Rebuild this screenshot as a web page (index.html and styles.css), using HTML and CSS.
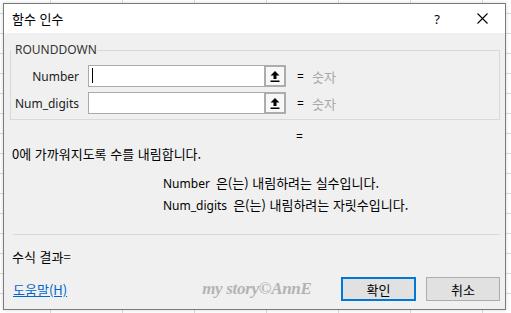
FILE: index.html
```html
<!DOCTYPE html>
<html lang="ko">
<head>
    <meta charset="UTF-8">
    <meta name="viewport" content="width=device-width, initial-scale=1.0">
    <title>함수 인수</title>
    <link rel="stylesheet" href="styles.css">
</head>
<body>
    <div class="dialog">
        <div class="titlebar">
            <div class="title">함수 인수</div>
            <div class="help">?</div>
            <div class="close">
                <svg width="11" height="11" viewBox="0 0 11 11">
                    <path d="M0.5 0.5 L10.5 10.5 M10.5 0.5 L0.5 10.5" stroke="#000" stroke-width="1.1" fill="none"/>
                </svg>
            </div>
        </div>

        <div class="content">
            <fieldset class="group">
                <legend>ROUNDDOWN</legend>
                <div class="arg-row">
                    <label class="arg-label">Number</label>
                    <div class="arg-input focused"><span class="caret"></span></div>
                    <button class="ref-btn">
                        <svg width="10" height="13" viewBox="0 0 10 13">
                            <path d="M5 1 L9.5 5.5 H6.5 V9 H3.5 V5.5 H0.5 Z" fill="#000"/>
                            <rect x="0.5" y="10.5" width="9" height="1.5" fill="#000"/>
                        </svg>
                    </button>
                    <span class="eq">=</span>
                    <span class="hint">숫자</span>
                </div>
                <div class="arg-row">
                    <label class="arg-label">Num_digits</label>
                    <div class="arg-input"></div>
                    <button class="ref-btn">
                        <svg width="10" height="13" viewBox="0 0 10 13">
                            <path d="M5 1 L9.5 5.5 H6.5 V9 H3.5 V5.5 H0.5 Z" fill="#000"/>
                            <rect x="0.5" y="10.5" width="9" height="1.5" fill="#000"/>
                        </svg>
                    </button>
                    <span class="eq">=</span>
                    <span class="hint">숫자</span>
                </div>
            </fieldset>

            <div class="result-eq">=</div>
            <p class="desc">0에 가까워지도록 수를 내림합니다.</p>
            <p class="arg-desc first"><span class="arg-name">Number</span>은(는) 내림하려는 실수입니다.</p>
            <p class="arg-desc"><span class="arg-name">Num_digits</span>은(는) 내림하려는 자릿수입니다.</p>

            <div class="separator"></div>

            <p class="formula">수식 결과=</p>

            <div class="footer">
                <a class="help-link" href="#">도움말(H)</a>
                <span class="watermark">my story©AnnE</span>
                <button class="btn btn-ok">확인</button>
                <button class="btn btn-cancel">취소</button>
            </div>
        </div>
    </div>
</body>
</html>
```

FILE: styles.css
```css
/* spreadsheet behind the dialog */
body {
    margin: 0;
    padding: 0;
    height: 313px;
    overflow: hidden;
    background-color: #fff;
    background-image:
        repeating-linear-gradient(to right, transparent 0, transparent 50px, #dadada 50px, #dadada 51px, transparent 51px, transparent 72px),
        repeating-linear-gradient(to bottom, transparent 0, transparent 13px, #dadada 13px, #dadada 14px, transparent 14px, transparent 20px);
    font-family: "Noto Sans", "Noto Sans CJK KR", sans-serif;
    font-size: 12px;
    color: #000;
}

.dialog {
    box-sizing: border-box;
    margin: 3px 0 0 3px;
    width: 503px;
    height: 307px;
    border: 1px solid #7a7a7a;
    background: #f0f0f0;
    display: flex;
    flex-direction: column;
    box-shadow: 0 0 4px rgba(0, 0, 0, 0.15);
}

.titlebar {
    height: 29px;
    background: #fff;
    display: flex;
    align-items: center;
    flex-shrink: 0;
}

.title {
    flex: 1;
    padding-left: 8px;
    font-family: "Noto Sans CJK KR", sans-serif;
    font-size: 13px;
    line-height: 16px;
    padding-top: 1px;
}

.help {
    width: 12px;
    text-align: center;
    font-size: 13px;
    margin-right: 34px;
}

.close {
    width: 11px;
    height: 11px;
    margin-right: 17px;
    display: flex;
}

.content {
    flex: 1;
    display: flex;
    flex-direction: column;
    padding: 0 5px 0 4px;
}

/* argument group box */
.group {
    margin: 9px 0 0 2px;
    padding: 7px 10px 5px 0;
    border: 1px solid #d9d9d9;
    min-width: 0;
}

.group legend {
    padding: 0 0 0 4px;
    line-height: 16px;
    color: #333;
}

.arg-row {
    display: flex;
    align-items: center;
    height: 22px;
}

.arg-row + .arg-row {
    margin-top: 5px;
}

.arg-label {
    width: 68px;
    text-align: right;
    margin-right: 9px;
    color: #222;
}

.arg-input {
    box-sizing: border-box;
    width: 176px;
    height: 22px;
    background: #fff;
    border: 1px solid #aaa;
    border-right: none;
    position: relative;
}

.caret {
    position: absolute;
    left: 3px;
    top: 2px;
    width: 1px;
    height: 15px;
    background: #000;
}

.ref-btn {
    box-sizing: border-box;
    width: 22px;
    height: 22px;
    padding: 0;
    border: 2px solid #acacac;
    background: #f7f7f7;
    display: flex;
    align-items: center;
    justify-content: center;
}

.eq {
    margin-left: 11px;
    width: 15px;
}

.hint {
    color: #a8a8a8;
    font-family: "Noto Sans CJK KR", sans-serif;
    font-size: 13px;
}

/* description area */
.result-eq {
    margin-top: 9px;
    padding-left: 288px;
    line-height: 16px;
}

.desc {
    margin: 1px 0 0 4px;
    line-height: 16px;
    font-family: "Noto Sans CJK KR", sans-serif;
    font-size: 13px;
}

.arg-desc {
    margin: 5px 0 0 155px;
    line-height: 16px;
    font-size: 13px;
    font-family: "Noto Sans CJK KR", sans-serif;
}

.arg-desc.first {
    margin-top: 13px;
}

.arg-name {
    font-family: "Noto Sans", sans-serif;
    font-size: 12px;
    margin-right: 6px;
}

.separator {
    height: 1px;
    background: #d8d8d8;
    margin: 20px 0 0 5px;
}

.formula {
    margin: 14px 0 0 4px;
    line-height: 16px;
    font-family: "Noto Sans CJK KR", sans-serif;
    font-size: 13px;
}

.footer {
    display: flex;
    align-items: center;
    margin-top: 12px;
    padding-left: 5px;
}

.help-link {
    flex-shrink: 0;
    white-space: nowrap;
    color: #0066cc;
    text-decoration: underline;
    font-family: "Noto Sans CJK KR", sans-serif;
    font-size: 13px;
}

.watermark {
    flex: 1;
    margin-left: 135px;
    white-space: nowrap;
    font-family: "Liberation Serif", serif;
    font-style: italic;
    font-weight: bold;
    font-size: 17px;
    color: #b3b3b3;
    letter-spacing: -0.3px;
}

.btn {
    flex-shrink: 0;
    box-sizing: border-box;
    height: 24px;
    font-family: "Noto Sans CJK KR", sans-serif;
    font-size: 13px;
    background: #e1e1e1;
    border: 1px solid #adadad;
    padding: 0;
}

.btn-ok {
    width: 75px;
    margin-left: 10px;
    border: 2px solid #0078d7;
}

.btn-cancel {
    width: 74px;
    margin-left: 10px;
}
```
